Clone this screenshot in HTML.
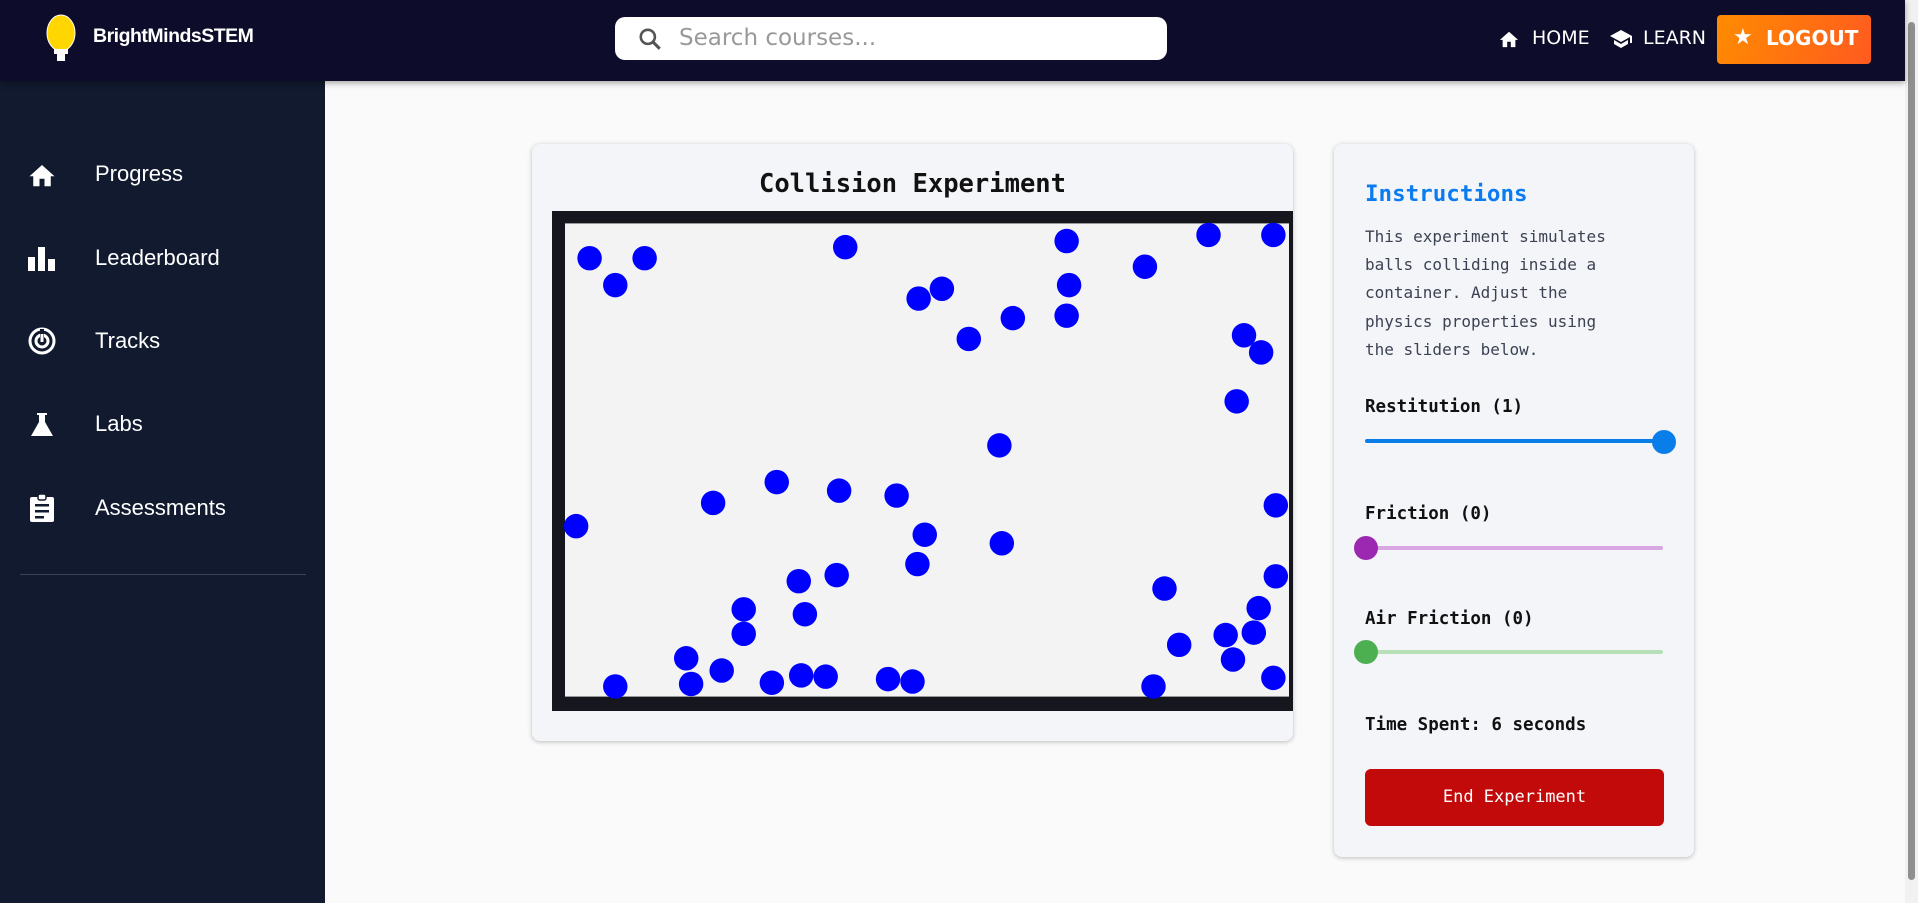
<!DOCTYPE html>
<html><head><meta charset="utf-8"><style>
*{box-sizing:border-box;margin:0;padding:0}
body{width:1918px;height:903px;overflow:hidden;background:#fafafa;font-family:"Liberation Sans",sans-serif;position:relative}
.hdr{position:absolute;left:0;top:0;width:1905px;height:81px;background:#0d0d2b;box-shadow:0 2px 6px rgba(0,0,0,.35);z-index:2}
.side{position:absolute;left:0;top:81px;width:325px;height:822px;background:#111a2f}
.brand{position:absolute;left:93px;top:25px;color:#fff;font-weight:bold;font-size:19.5px;letter-spacing:-0.5px}
.search{position:absolute;left:615px;top:17px;width:552px;height:43px;background:#fff;border-radius:10px}
.search span{position:absolute;left:64px;top:8px;font-size:23px;color:#999;font-family:"DejaVu Sans","Liberation Sans",sans-serif}
.nav{position:absolute;top:27px;color:#fff;font-size:19px;font-family:"DejaVu Sans",sans-serif}
.logout{position:absolute;left:1717px;top:15px;width:154px;height:49px;border-radius:4px;background:linear-gradient(110deg,#ff8c00,#ff5a1f);color:#fff;font-weight:bold;font-size:20px;font-family:"DejaVu Sans",sans-serif}
.item{position:absolute;left:95px;color:#fff;font-size:22px}
.ico{position:absolute;left:27px}
.card{position:absolute;background:#f4f5f9;border-radius:8px;box-shadow:0 1px 5px rgba(0,0,0,.25)}
.mono{font-family:"DejaVu Sans Mono","Liberation Mono",monospace}
.lbl{position:absolute;left:1365px;font-weight:bold;font-size:17.5px;color:#111}
.track{position:absolute;left:1365px;width:298px;height:4px;border-radius:2px}
.thumb{position:absolute;width:24px;height:24px;border-radius:50%}
</style></head><body>
<div class="hdr">
<svg style="position:absolute;left:40px;top:12px" width="44" height="54" viewBox="0 0 44 54"><ellipse cx="21" cy="21" rx="14" ry="18" fill="#ffd600" stroke="#fff" stroke-width="1"/><rect x="14" y="37" width="14" height="5" fill="#fff"/><rect x="17" y="42" width="8" height="7" fill="#fff"/></svg>
<div class="brand">BrightMindsSTEM</div>
<div class="search"><svg style="position:absolute;left:22px;top:9px" width="26" height="26" viewBox="0 0 24 24"><circle cx="10" cy="10" r="6.5" fill="none" stroke="#555" stroke-width="2.4"/><path d="M15 15l6 6" stroke="#555" stroke-width="2.8"/></svg><span>Search courses...</span></div>
<svg style="position:absolute;left:1498px;top:29px" width="22" height="20" viewBox="0 0 24 22"><path d="M10 20v-6h4v6h5v-8h3L12 3 2 12h3v8z" fill="#fff"/></svg>
<div class="nav" style="left:1532px">HOME</div>
<svg style="position:absolute;left:1609px;top:29px" width="24" height="20" viewBox="0 0 24 20"><path d="M12 1L1 7l11 6 9-5v6h2V7z M5 11v4l7 4 7-4v-4l-7 4z" fill="#fff"/></svg>
<div class="nav" style="left:1643px">LEARN</div>
<div class="logout"><span style="position:absolute;left:16px;top:10px;font-size:22px">★</span><span style="position:absolute;left:49px;top:11px">LOGOUT</span></div>
</div>
<div style="position:absolute;right:0;top:0;width:13px;height:903px;background:#f1f1f1"><div style="position:absolute;left:3px;top:22px;width:7px;height:858px;background:#8f8f8f;border-radius:4px"></div></div>
<div class="side">
<svg class="ico" style="top:80px" width="30" height="28" viewBox="0 0 24 22"><path d="M10 20v-6h4v6h5v-8h3L12 3 2 12h3v8z" fill="#fff"/></svg>
<div class="item" style="top:80px">Progress</div>
<svg class="ico" style="top:164px" width="30" height="28" viewBox="0 0 30 28"><rect x="1" y="12" width="7" height="14" fill="#fff"/><rect x="11" y="2" width="7" height="24" fill="#fff"/><rect x="21" y="14" width="7" height="12" fill="#fff"/></svg>
<div class="item" style="top:164px">Leaderboard</div>
<svg class="ico" style="top:245px" width="30" height="30" viewBox="0 0 30 30"><circle cx="15" cy="15" r="12" fill="none" stroke="#fff" stroke-width="3"/><circle cx="15" cy="15" r="6" fill="none" stroke="#fff" stroke-width="3"/><path d="M15 3v12" stroke="#111a2f" stroke-width="4"/><path d="M15 8v8" stroke="#fff" stroke-width="3"/></svg>
<div class="item" style="top:247px">Tracks</div>
<svg class="ico" style="top:330px" width="30" height="28" viewBox="0 0 30 28"><path d="M10 2h10v2h-2v7l8 14H4l8-14V4h-2z" fill="#fff"/></svg>
<div class="item" style="top:330px">Labs</div>
<svg class="ico" style="top:412px" width="30" height="30" viewBox="0 0 30 30"><rect x="3" y="4" width="24" height="25" rx="2" fill="#fff"/><rect x="11" y="1" width="8" height="6" rx="2" fill="#fff" stroke="#111a2f" stroke-width="1.5"/><rect x="8" y="11" width="14" height="2.5" fill="#111a2f"/><rect x="8" y="17" width="14" height="2.5" fill="#111a2f"/><rect x="8" y="23" width="9" height="2.5" fill="#111a2f"/></svg>
<div class="item" style="top:414px">Assessments</div>
<div style="position:absolute;left:20px;top:493px;width:286px;height:1px;background:#3a4356"></div>
</div>
<div class="card" style="left:532px;top:144px;width:761px;height:597px">
<div class="mono" style="position:absolute;left:0;right:0;top:25px;text-align:center;font-weight:bold;font-size:25.5px;color:#111">Collision Experiment</div>
<div style="position:absolute;left:20px;top:67px;width:741px;height:500px;background:#16161e"></div>
<div style="position:absolute;left:33px;top:79px;width:724px;height:474px;background:#f3f3f4;border-top:1px solid #999;border-bottom:1px solid #999"></div>
</div>
<div class="card" style="left:1334px;top:144px;width:360px;height:713px"></div>
<div class="mono" style="position:absolute;left:1365px;top:181px;font-weight:bold;font-size:22.5px;color:#0a7cf0">Instructions</div>
<div class="mono" style="position:absolute;left:1365px;top:223px;font-size:16px;line-height:28.2px;color:#3b4252">This experiment simulates<br>balls colliding inside a<br>container. Adjust the<br>physics properties using<br>the sliders below.</div>
<div class="lbl mono" style="top:397px">Restitution (1)</div>
<div class="track" style="top:439px;background:#0a7ee8"></div><div class="thumb" style="left:1652px;top:430px;background:#0a7ee8"></div>
<div class="lbl mono" style="top:504px">Friction (0)</div>
<div class="track" style="top:546px;background:#d8a6e0"></div><div class="thumb" style="left:1354px;top:536px;background:#9c27b0"></div>
<div class="lbl mono" style="top:609px">Air Friction (0)</div>
<div class="track" style="top:650px;background:#b7e0b8"></div><div class="thumb" style="left:1354px;top:640px;background:#4caf50"></div>
<div class="lbl mono" style="top:715px">Time Spent: 6 seconds</div>
<div class="mono" style="position:absolute;left:1365px;top:769px;width:299px;height:57px;background:#c20a0a;border-radius:6px;color:#fff;font-size:17px;text-align:center;line-height:57px">End Experiment</div>
<svg style="position:absolute;left:0;top:0;pointer-events:none" width="1918" height="903" viewBox="0 0 1568 738" preserveAspectRatio="none"><g fill="#0000ff">
<circle cx="482" cy="211" r="10"/><circle cx="503" cy="233" r="10"/><circle cx="527" cy="211" r="10"/><circle cx="691" cy="202" r="10"/><circle cx="751" cy="244" r="10"/><circle cx="770" cy="236" r="10"/><circle cx="792" cy="277" r="10"/><circle cx="828" cy="260" r="10"/><circle cx="872" cy="197" r="10"/><circle cx="874" cy="233" r="10"/><circle cx="872" cy="258" r="10"/><circle cx="936" cy="218" r="10"/><circle cx="988" cy="192" r="10"/><circle cx="1041" cy="192" r="10"/><circle cx="1017" cy="274" r="10"/><circle cx="1031" cy="288" r="10"/><circle cx="1011" cy="328" r="10"/><circle cx="817" cy="364" r="10"/><circle cx="583" cy="411" r="10"/><circle cx="635" cy="394" r="10"/><circle cx="686" cy="401" r="10"/><circle cx="733" cy="405" r="10"/><circle cx="756" cy="437" r="10"/><circle cx="750" cy="461" r="10"/><circle cx="819" cy="444" r="10"/><circle cx="471" cy="430" r="10"/><circle cx="1043" cy="413" r="10"/><circle cx="653" cy="475" r="10"/><circle cx="684" cy="470" r="10"/><circle cx="608" cy="498" r="10"/><circle cx="658" cy="502" r="10"/><circle cx="608" cy="518" r="10"/><circle cx="561" cy="538" r="10"/><circle cx="590" cy="548" r="10"/><circle cx="565" cy="559" r="10"/><circle cx="503" cy="561" r="10"/><circle cx="631" cy="558" r="10"/><circle cx="655" cy="552" r="10"/><circle cx="675" cy="553" r="10"/><circle cx="726" cy="555" r="10"/><circle cx="746" cy="557" r="10"/><circle cx="943" cy="561" r="10"/><circle cx="952" cy="481" r="10"/><circle cx="964" cy="527" r="10"/><circle cx="1002" cy="519" r="10"/><circle cx="1008" cy="539" r="10"/><circle cx="1025" cy="517" r="10"/><circle cx="1029" cy="497" r="10"/><circle cx="1043" cy="471" r="10"/><circle cx="1041" cy="554" r="10"/>
</g></svg>
</body></html>
